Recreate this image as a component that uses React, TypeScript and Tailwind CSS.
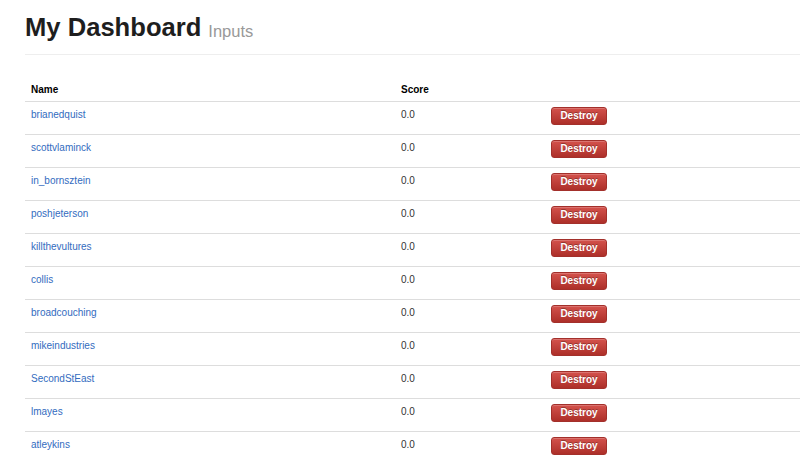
const inputs = [
  "brianedquist",
  "scottvlaminck",
  "in_bornsztein",
  "poshjeterson",
  "killthevultures",
  "collis",
  "broadcouching",
  "mikeindustries",
  "SecondStEast",
  "lmayes",
  "atleykins",
];

function DestroyButton() {
  return (
    <button className="h-[18px] w-[56px] rounded-[3px] border border-[#a3302b] bg-gradient-to-b from-[#d4524c] to-[#ad2f29] text-[10px] font-bold leading-none text-white shadow-[inset_0_1px_0_rgba(255,255,255,0.2)] [text-shadow:0_-1px_0_rgba(0,0,0,0.3)]">
      Destroy
    </button>
  );
}

export default function App() {
  return (
    <div className="min-h-[464px] w-full overflow-hidden bg-white pl-[25px] pt-[12px] font-['Liberation_Sans',Arial,sans-serif] text-[10px] text-[#333]">
      <div className="flex h-[43px] items-start gap-[7px] border-b border-[#eee]">
        <h1 className="text-[25.6px] font-bold leading-[30px] text-[#1e1e1e]">
          My Dashboard
        </h1>
        <span className="pt-[4px] text-[16.5px] leading-[30px] text-[#999]">Inputs</span>
      </div>

      <div className="mt-[22px] flex pb-[4px] pt-[6px] font-bold leading-[14px] text-black">
        <div className="w-[370px] pl-[6px]">Name</div>
        <div className="w-[150px] pl-[6px]">Score</div>
        <div className="flex-1" />
      </div>

      {inputs.map((name) => (
        <div key={name} className="flex h-[33px] border-t border-[#ddd] pt-[5px] leading-[14px]">
          <div className="w-[370px] pl-[6px] pt-[1px]">
            <a href="#" className="text-[#336cc0]">
              {name}
            </a>
          </div>
          <div className="w-[150px] pl-[6px] pt-[1px]">0.0</div>
          <div className="flex-1 pl-[6px]">
            <DestroyButton />
          </div>
        </div>
      ))}
    </div>
  );
}
